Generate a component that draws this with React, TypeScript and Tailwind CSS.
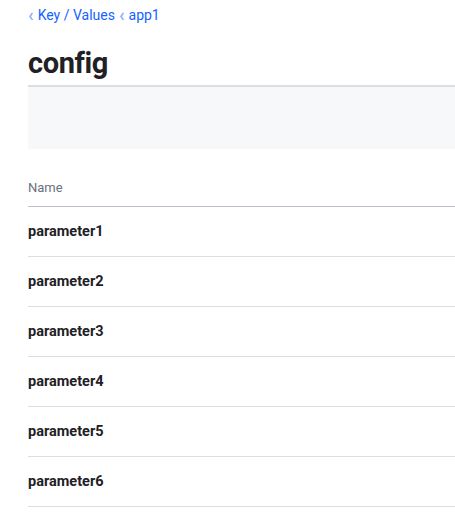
const params = [
    "parameter1",
    "parameter2",
    "parameter3",
    "parameter4",
    "parameter5",
    "parameter6",
];

export default function App() {
    return (
        <div className="min-h-[526px] bg-white pl-[28px] font-['Roboto',sans-serif]">
            <nav className="flex items-center h-[30px] text-[14px] text-[#1563ff]">
                <span className="text-[#8fb0ff] mr-[4px] text-[18px] font-bold leading-none">‹</span>
                <span>Key / Values</span>
                <span className="text-[#8fb0ff] mx-[4px] text-[18px] font-bold leading-none">‹</span>
                <span>app1</span>
            </nav>
            <h1 className="text-[29px] tracking-[-0.4px] font-bold leading-[36px] text-[#1f2124] pt-[15px] pb-[4px] border-b-2 border-[#dcdee2]">
                config
            </h1>
            <div className="h-[62px] bg-[#f7f8fa]"></div>
            <div className="pt-[31px] pb-[10px] text-[13px] leading-[16px] text-[#6a7080] border-b border-[#bac1cc]">
                Name
            </div>
            {params.map((p) => (
                <div
                    key={p}
                    className="h-[50px] flex items-center border-b border-[#dcdee6] text-[14.5px] font-bold text-[#1f2124]"
                >
                    {p}
                </div>
            ))}
        </div>
    );
}
